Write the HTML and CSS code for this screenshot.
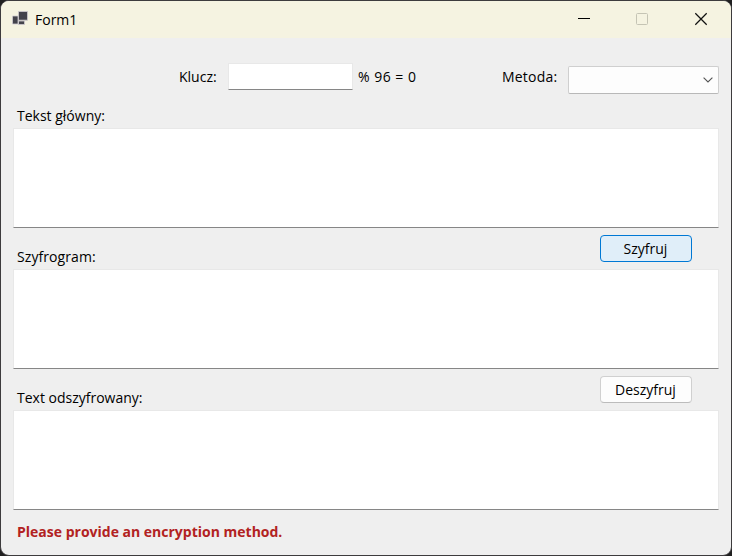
FILE: index.html
```
<!DOCTYPE html>
<html lang="pl">
<head>
<meta charset="utf-8">
<title>Form1</title>
<link rel="stylesheet" href="styles.css">
</head>
<body>
<main class="window">
  <header class="titlebar">
    <svg class="app-icon" width="18" height="18" viewBox="0 0 18 18">
      <path d="M1.5 6h5.5v8H1.5zM7.5 11h6v3.5h-6z" fill="#43434b" stroke="#cfccd0" stroke-width=".8"/>
      <path d="M7.5 1.5h9v8.7h-9z" fill="#43434b" stroke="#cfccd0" stroke-width=".8"/>
    </svg>
    <h1 class="title">Form1</h1>
    <div class="controls">
      <svg width="14" height="14" viewBox="0 0 14 14"><path d="M1 6.5h12" stroke="#000"/></svg>
      <svg width="14" height="14" viewBox="0 0 14 14"><rect x="1.5" y="1.5" width="11" height="11" rx="1" fill="none" stroke="#c5c4b4"/></svg>
      <svg width="14" height="14" viewBox="0 0 14 14"><path d="M1.3 1.3l11.4 11.4M12.7 1.3L1.3 12.7" stroke="#111" stroke-width="1.25"/></svg>
    </div>
  </header>
  <form class="form">
    <div class="settings">
      <label class="label key-label">Klucz:</label>
      <div class="input"></div>
      <span class="label hint">% 96 = 0</span>
      <label class="label method-label">Metoda:</label>
      <div class="select">
        <svg width="10" height="6" viewBox="0 0 10 6"><path d="M.6.6L5 5 9.4.6" fill="none" stroke="#555" stroke-width="1.1"/></svg>
      </div>
    </div>
    <div class="row first"><label class="label">Tekst główny:</label></div>
    <div class="area"></div>
    <div class="row"><label class="label cipher-label">Szyfrogram:</label><button type="button" class="button active">Szyfruj</button></div>
    <div class="area"></div>
    <div class="row"><label class="label">Text odszyfrowany:</label><button type="button" class="button">Deszyfruj</button></div>
    <div class="area"></div>
    <p class="error">Please provide an encryption method.</p>
  </form>
</main>
</body>
</html>
```
FILE: styles.css
```
* { box-sizing: border-box; }
body {
  margin: 0;
  height: 556px;
  overflow: hidden;
  background: #202020;
  font: 14px/20px "Open Sans", "Noto Sans", sans-serif;
  color: #000;
}
.window {
  height: 556px;
  border: 1px solid #3d3b3d;
  border-radius: 9px;
  overflow: hidden;
  background: #efefef;
}
.titlebar {
  display: flex;
  align-items: center;
  height: 37px;
  padding: 0 16px 0 10px;
  background: #f5f3e1;
}
.app-icon { display: block; margin-top: -1px; }
.title { margin: 0 0 0 6px; font-size: 14px; font-weight: 400; }
.controls { display: flex; gap: 45px; margin: -1px 7px 0 auto; }
.controls svg { display: block; }
.controls svg:first-child { margin-right: -1px; }
.form { padding: 0 12px; }
.settings { display: flex; height: 66px; padding-top: 25px; }
.label { white-space: nowrap; }
.settings .label { margin-top: 4px; }
.key-label { flex: 0 0 49px; margin-left: 166px; }
.input {
  flex: 0 0 125px;
  height: 27px;
  background: #fff;
  border: 1px solid #e8e8e8;
  border-bottom-color: #868686;
}
.hint { flex: 0 0 144px; margin-left: 5px; letter-spacing: .5px; }
.method-label { flex: 0 0 66px; letter-spacing: .2px; }
.select {
  display: flex;
  flex: 0 0 151px;
  align-items: center;
  justify-content: flex-end;
  height: 28px;
  margin-top: 3px;
  padding-right: 5px;
  background: #fdfdfd;
  border: 1px solid #cfcfcf;
  border-bottom-color: #b8b8b8;
  border-radius: 2px;
}
.row { display: flex; justify-content: space-between; height: 41px; padding: 7px 27px 0 4px; }
.row .label { padding-top: 12px; }
.row.first { height: 24px; padding-top: 2px; }
.row.first .label { padding-top: 0; }
.cipher-label { letter-spacing: .08px; }
.area {
  height: 100px;
  background: #fff;
  border: 1px solid #e8e8e8;
  border-bottom-color: #868686;
}
.button {
  width: 92px;
  height: 27px;
  padding: 1px 1px 0 0;
  border: 1px solid #d0d0d0;
  border-bottom-color: #bcbcbc;
  border-radius: 4px;
  background: #fdfdfd;
  color: #000;
  font: inherit;
}
.button.active { border-color: #0078d4; background: #e0eef9; }
.error { margin: 12px 0 0 4px; font-weight: 700; color: #b22222; white-space: nowrap; }
```
